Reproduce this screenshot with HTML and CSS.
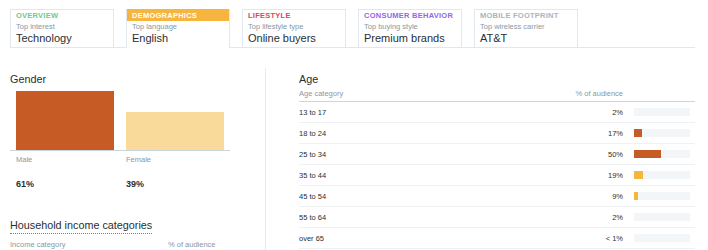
FILE: index.html
```html
<!DOCTYPE html>
<html lang="en">

<head>
  <meta charset="UTF-8">
  <title>Audience insights</title>
  <link rel="stylesheet" href="styles.css">
</head>

<body>
  <!-- Tabs -->
  <div class="tabs">
    <div class="tab tab-overview">
      <div class="tab-title">Overview</div>
      <div class="tab-sub">Top interest</div>
      <div class="tab-value">Technology</div>
    </div>
    <div class="tab tab-demo active">
      <div class="tab-title">Demographics</div>
      <div class="tab-sub">Top language</div>
      <div class="tab-value">English</div>
    </div>
    <div class="tab tab-life">
      <div class="tab-title">Lifestyle</div>
      <div class="tab-sub">Top lifestyle type</div>
      <div class="tab-value">Online buyers</div>
    </div>
    <div class="tab tab-consumer">
      <div class="tab-title">Consumer behavior</div>
      <div class="tab-sub">Top buying style</div>
      <div class="tab-value">Premium brands</div>
    </div>
    <div class="tab tab-mobile">
      <div class="tab-title">Mobile footprint</div>
      <div class="tab-sub">Top wireless carrier</div>
      <div class="tab-value">AT&amp;T</div>
    </div>
  </div>

  <div class="content">
    <!-- Left column -->
    <div class="left">
      <h2>Gender</h2>
      <div class="gender-chart">
        <div class="gcol"><div class="gbar male" style="height: 59px"></div></div>
        <div class="gcol"><div class="gbar female" style="height: 38px"></div></div>
      </div>
      <div class="gender-labels">
        <div class="glabel">
          <span class="gname">Male</span>
          <span class="gpct">61%</span>
        </div>
        <div class="glabel">
          <span class="gname">Female</span>
          <span class="gpct">39%</span>
        </div>
      </div>

      <h2 class="dotted">Household income categories</h2>
      <div class="table-head small">
        <span>Income category</span>
        <span>% of audience</span>
      </div>
    </div>

    <div class="divider"></div>

    <!-- Right column -->
    <div class="right">
      <h2>Age</h2>
      <div class="age-head">
        <span>Age category</span>
        <span class="pct">% of audience</span>
        <span></span>
      </div>
      <div class="age-row"><span>13 to 17</span><span class="pct">2%</span><div class="track"></div></div>
      <div class="age-row"><span>18 to 24</span><span class="pct">17%</span><div class="track"><div class="fill red" style="width: 8px"></div></div></div>
      <div class="age-row"><span>25 to 34</span><span class="pct">50%</span><div class="track"><div class="fill red" style="width: 27px"></div></div></div>
      <div class="age-row"><span>35 to 44</span><span class="pct">19%</span><div class="track"><div class="fill yellow" style="width: 9px"></div></div></div>
      <div class="age-row"><span>45 to 54</span><span class="pct">9%</span><div class="track"><div class="fill yellow" style="width: 4px"></div></div></div>
      <div class="age-row"><span>55 to 64</span><span class="pct">2%</span><div class="track"></div></div>
      <div class="age-row"><span>over 65</span><span class="pct">&lt; 1%</span><div class="track"></div></div>
    </div>
  </div>
</body>

</html>
```

FILE: styles.css
```css
body {
  font-family: "Liberation Sans", Arial, sans-serif;
  color: #292f33;
  background: #fff;
  margin: 0;
  padding: 0;
}

/* Tabs */
.tabs {
  display: flex;
  gap: 12px;
  margin: 9px 13px 0 10px;
  border-bottom: 1px solid #e1e8ed;
  height: 38px;
}

.tab {
  width: 104px;
  box-sizing: border-box;
  border: 1px solid #e1e8ed;
  border-bottom: none;
  padding: 0 5px;
  height: 38px;
  white-space: nowrap;
  overflow: hidden;
}

.tab-title {
  font-size: 7.5px;
  font-weight: bold;
  text-transform: uppercase;
  letter-spacing: 0.25px;
  line-height: 11px;
  margin: 0 -5px;
  padding: 0 5px;
}

.tab-overview .tab-title { color: #6ccb8b; }
.tab-life .tab-title { color: #e0445a; }
.tab-consumer .tab-title { color: #9266e8; }
.tab-mobile .tab-title { color: #a9b5be; }

.tab.active {
  border-top: none;
  height: 39px;
  background: #fff;
}

.tab.active .tab-title {
  background: #f5b53f;
  color: #fff;
  margin: 0 -6px;
  padding: 1px 6px 0;
}

.tab-sub {
  font-size: 7.5px;
  color: #8899a6;
  line-height: 11px;
}

.tab-value {
  font-size: 11px;
  line-height: 13px;
  color: #292f33;
}

/* Content */
.content {
  display: flex;
  margin: 24px 13px 0 10px;
}

h2 {
  font-size: 10.8px;
  font-weight: normal;
  margin: 0;
  line-height: 14px;
}

.left {
  width: 220px;
}

.gender-chart {
  display: flex;
  gap: 12px;
  height: 59px;
  margin-top: 5px;
  padding-left: 6px;
  border-bottom: 1px solid #c8d6df;
  align-items: flex-end;
}

.gcol {
  width: 98px;
  display: flex;
  align-items: flex-end;
}

.gbar {
  width: 100%;
}

.male { background: #c75b25; }
.female { background: #f9da9b; }

.gender-labels {
  display: flex;
  gap: 12px;
  padding-left: 6px;
}

.glabel {
  width: 98px;
  display: flex;
  flex-direction: column;
}

.gname {
  font-size: 7.5px;
  color: #8899a6;
  margin-top: 4px;
}

.gpct {
  font-size: 9px;
  font-weight: bold;
  margin-top: 15px;
}

h2.dotted {
  margin-top: 29px;
  display: inline-block;
  border-bottom: 1px dotted #3b94d9;
  padding-bottom: 1px;
}

.table-head {
  display: flex;
  font-size: 7.5px;
  color: #8899a6;
  margin-top: 6px;
  padding-bottom: 4px;
  border-bottom: 1px solid #ccd6dd;
}

.table-head span:first-child {
  width: 158px;
}

.divider {
  width: 1px;
  background: #e6ecf0;
  margin: -4px 33px 0 35px;
}

.right {
  flex: 1;
}

.age-head {
  display: grid;
  grid-template-columns: 1fr 80px 72px;
  font-size: 7.5px;
  color: #8899a6;
  margin-top: 3px;
  padding-bottom: 3px;
  border-bottom: 1px solid #ccd6dd;
}

.pct {
  text-align: right;
}

.age-row {
  display: grid;
  grid-template-columns: 1fr 80px 72px;
  align-items: center;
  height: 20px;
  font-size: 7.5px;
  color: #292f33;
  border-bottom: 1px solid #eef2f5;
}

.track {
  margin-left: 11px;
  width: 56px;
  height: 8px;
  background: #f2f6f9;
}

.fill {
  height: 100%;
}

.red { background: #c75b25; }
.yellow { background: #f4b73e; }
```
